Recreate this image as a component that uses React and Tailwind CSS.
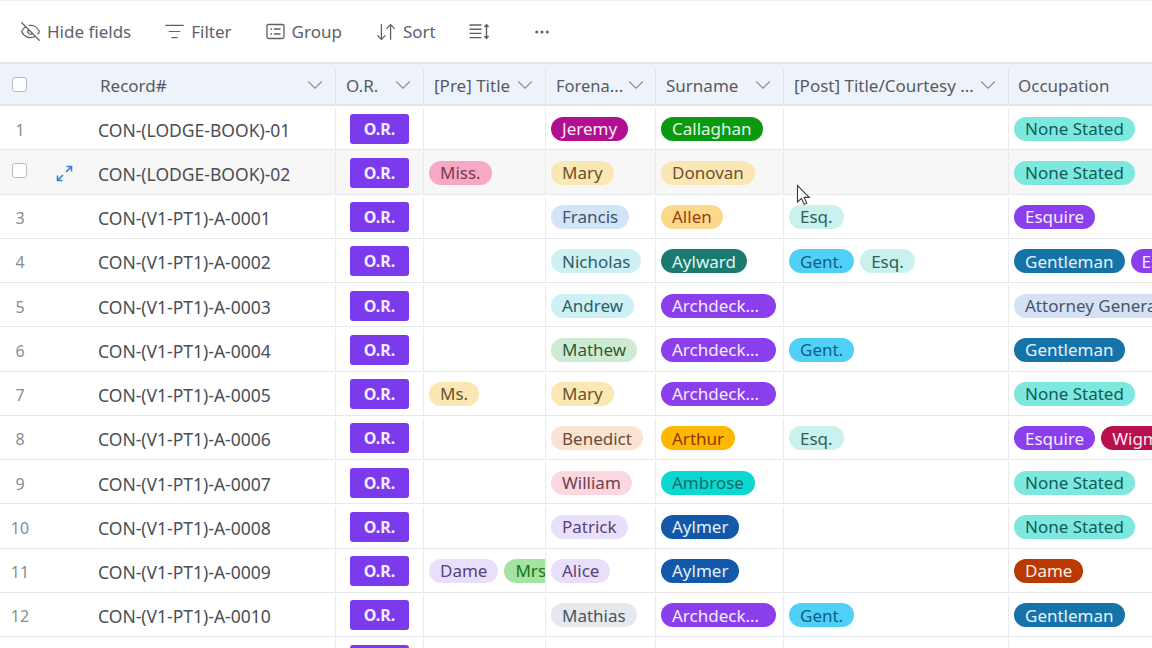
import React from "react";
import { EyeOff, ListFilter, ArrowDownUp, ChevronDown, Ellipsis } from "lucide-react";

const purple = "bg-[#7c3aed] text-[#f3ecff]";
const colors = {
  magenta: "bg-[#b0108f] text-[#fde8f7]",
  green: "bg-[#0a9a12] text-[#e4f8e4]",
  darkTeal: "bg-[#1b7a6e] text-[#e0f5f2]",
  violet: "bg-[#8b3fec] text-[#f3ebff]",
  orange: "bg-[#ffb800] text-[#8a3a0a]",
  cyan: "bg-[#0bd8d0] text-[#0f6d70]",
  navy: "bg-[#1259aa] text-[#e3effc]",
  blue: "bg-[#1673a8] text-[#e3f3fc]",
  rust: "bg-[#b83a02] text-[#fdebdd]",
  crimson: "bg-[#b8104f] text-[#fde5ee]",
  teal: "bg-[#7ce8de] text-[#125c5a]",
  sky: "bg-[#4fd0f7] text-[#0f5f88]",
  pink: "bg-[#f7a8c4] text-[#7c3a50]",
  cream: "bg-[#fbe7b3] text-[#6a5230]",
  peach: "bg-[#fae3d2] text-[#6a4a38]",
  ltBlue: "bg-[#d3e4f8] text-[#3d5470]",
  ltAqua: "bg-[#cdf0f5] text-[#2f5d66]",
  mint: "bg-[#c9f1ee] text-[#2f5f5a]",
  ltGreen: "bg-[#cfead2] text-[#2f5c38]",
  rose: "bg-[#fbd7e0] text-[#70404f]",
  lilac: "bg-[#eadffa] text-[#54437a]",
  grey: "bg-[#e5e8ed] text-[#4b5563]",
  ltGrey: "bg-[#d5e2f6] text-[#4b5563]",
  amber: "bg-[#fcd98a] text-[#9a3c10]",
  mrs: "bg-[#a6e3a0] text-[#14761f]",
};

const rows = [
  { n: 1, id: "CON-(LODGE-BOOK)-01", fore: ["Jeremy", "magenta"], sur: ["Callaghan", "green"], occ: [["None Stated", "teal"]] },
  { n: 2, id: "CON-(LODGE-BOOK)-02", hover: true, pre: [["Miss.", "pink"]], fore: ["Mary", "cream"], sur: ["Donovan", "cream"], occ: [["None Stated", "teal"]] },
  { n: 3, id: "CON-(V1-PT1)-A-0001", fore: ["Francis", "ltBlue"], sur: ["Allen", "amber"], post: [["Esq.", "mint"]], occ: [["Esquire", "violet"]] },
  { n: 4, id: "CON-(V1-PT1)-A-0002", fore: ["Nicholas", "ltAqua"], sur: ["Aylward", "darkTeal"], post: [["Gent.", "sky"], ["Esq.", "mint"]], occ: [["Gentleman", "blue"], ["Esquire", "violet"]] },
  { n: 5, id: "CON-(V1-PT1)-A-0003", fore: ["Andrew", "ltAqua"], sur: ["Archdeck...", "violet"], occ: [["Attorney General", "ltGrey"]] },
  { n: 6, id: "CON-(V1-PT1)-A-0004", fore: ["Mathew", "ltGreen"], sur: ["Archdeck...", "violet"], post: [["Gent.", "sky"]], occ: [["Gentleman", "blue"]] },
  { n: 7, id: "CON-(V1-PT1)-A-0005", pre: [["Ms.", "cream"]], fore: ["Mary", "cream"], sur: ["Archdeck...", "violet"], occ: [["None Stated", "teal"]] },
  { n: 8, id: "CON-(V1-PT1)-A-0006", fore: ["Benedict", "peach"], sur: ["Arthur", "orange"], post: [["Esq.", "mint"]], occ: [["Esquire", "violet"], ["Wigmaker", "crimson"]] },
  { n: 9, id: "CON-(V1-PT1)-A-0007", fore: ["William", "rose"], sur: ["Ambrose", "cyan"], occ: [["None Stated", "teal"]] },
  { n: 10, id: "CON-(V1-PT1)-A-0008", fore: ["Patrick", "lilac"], sur: ["Aylmer", "navy"], occ: [["None Stated", "teal"]] },
  { n: 11, id: "CON-(V1-PT1)-A-0009", pre: [["Dame", "lilac"], ["Mrs", "mrs"]], fore: ["Alice", "lilac"], sur: ["Aylmer", "navy"], occ: [["Dame", "rust"]] },
  { n: 12, id: "CON-(V1-PT1)-A-0010", fore: ["Mathias", "grey"], sur: ["Archdeck...", "violet"], post: [["Gent.", "sky"]], occ: [["Gentleman", "blue"]] },
  { n: 13, id: "", pre: [["Mrs.", "mrs"]], fore: ["Mary", "cream"], sur: ["Archdeck...", "violet"], occ: [["None Stated", "teal"]] },
];

const gridCols = "grid grid-cols-[88px_248px_88px_122px_110px_128px_225px_1fr]";

// truncated labels keep extra room on the right of the pill
const Pill = ({ label, color }) => (
  <span className={`inline-flex h-6 shrink-0 items-center rounded-full pl-[11px] whitespace-nowrap ${label.endsWith("...") ? "pr-[17px]" : "pr-[11px]"} ${colors[color]}`}>
    {label}
  </span>
);

const Cell = ({ children, className = "" }) => (
  <div className={`flex min-w-0 items-center gap-1.5 overflow-hidden border-r border-[#e9ebee] pl-[5px] ${className}`}>{children}</div>
);

const ToolButton = ({ icon, label, className = "" }) => (
  <div className={`flex items-center ${className}`}>
    {icon}
    {label}
  </div>
);

const HeaderCell = ({ label, chevron = true, className = "" }) => (
  <div className={`flex min-w-0 items-center justify-between border-r border-[#e1e5ec] pr-[7px] pl-2.5 ${className}`}>
    <span className="whitespace-nowrap">{label}</span>
    {chevron && <ChevronDown size={26} strokeWidth={1} className="mb-0.5 shrink-0 text-[#8a919c]" />}
  </div>
);

const GroupIcon = () => (
  <svg width="19" height="17" viewBox="0 0 19 17" fill="none" stroke="currentColor" strokeWidth="1.3">
    <rect x="1" y="1.5" width="17" height="14" rx="1.5" />
    <path d="M4.5 6h1.5M8 6h6.5M4.5 11h1.5M8 11h6.5" />
  </svg>
);

const RowHeightIcon = () => (
  <svg width="21" height="17" viewBox="0 0 21 17" fill="none" stroke="currentColor" strokeWidth="1.4">
    <path d="M0.5 2h12M0.5 6.2h12M0.5 10.4h12M0.5 14.6h12M17.5 2v13M15.5 4l2-2.5 2 2.5M15.5 13l2 2.5 2-2.5" />
  </svg>
);

const ExpandIcon = () => (
  <svg width="17" height="17" viewBox="0 0 17 17" fill="none" stroke="#3b82c4" strokeWidth="1.6">
    <path d="M10 7l5-5M10.5 1.5h5v5M7 10l-5 5M1.5 10.5v5h5" />
  </svg>
);

const Cursor = () => (
  <svg className="absolute top-[184px] left-[796px]" width="15" height="23" viewBox="0 0 15 23" fill="#fff" stroke="#3a3a3a" strokeWidth="1.1">
    <path d="M1.5 1.5v16.5l4-3.6 2.7 6 2.6-1.1-2.7-5.9h5.2z" />
  </svg>
);

const Row = ({ row }) => (
  <div className={`${gridCols} h-[44.25px] border-b border-[#e6e8ec] pt-0.5 ${row.hover ? "bg-[#f7f7f8]" : "bg-white"}`}>
    <div className="flex items-center">
      {row.hover ? (
        <>
          <span className="mb-1 ml-3 h-[15px] w-[15px] rounded-[3px] border border-[#b9bcc2] bg-white" />
          <span className="ml-[29px] pt-0.5"><ExpandIcon /></span>
        </>
      ) : (
        <span className="w-10 pt-0.5 text-center text-[16px] text-[#878c94]">{row.n}</span>
      )}
    </div>
    <div className="flex items-center border-r border-[#e9ebee] pt-0.5 pl-2.5 text-[17.5px] text-[#4a4f57]">{row.id}</div>
    <div className="flex items-center justify-center border-r border-[#e9ebee]">
      <span className={`flex h-[30px] w-[59px] items-center justify-center rounded-[3px] text-[16px] font-bold ${purple}`}>O.R.</span>
    </div>
    <Cell className="pl-1.5">{row.pre?.map(([l, c]) => <Pill key={l} label={l} color={c} />)}</Cell>
    <Cell>
      <Pill label={row.fore[0]} color={row.fore[1]} />
    </Cell>
    <Cell>
      <Pill label={row.sur[0]} color={row.sur[1]} />
    </Cell>
    <Cell>{row.post?.map(([l, c]) => <Pill key={l} label={l} color={c} />)}</Cell>
    <Cell className="border-r-0">{row.occ.map(([l, c]) => <Pill key={l} label={l} color={c} />)}</Cell>
  </div>
);

export default function App() {
  return (
    <div className="relative h-[648px] w-[1152px] overflow-hidden bg-white font-['Noto_Sans',sans-serif] text-[17px] text-[#4a4f57]">
      <div className="h-px bg-[#f5efe6]" />
      <div className="flex h-[61px] items-center pl-5 text-[#5b616a]">
        <ToolButton icon={<EyeOff size={21} strokeWidth={1.4} className="mr-1.5" />} label="Hide fields" className="mr-[33px]" />
        <ToolButton icon={<ListFilter size={21} strokeWidth={1.4} className="mr-1.5" />} label="Filter" className="mr-[34px]" />
        <ToolButton icon={<GroupIcon />} label={<span className="ml-[7px]">Group</span>} className="mr-[33px]" />
        <ToolButton icon={<ArrowDownUp size={22} strokeWidth={1.4} className="mr-1.5" />} label="Sort" className="mr-[33px]" />
        <RowHeightIcon />
        <Ellipsis size={18} className="ml-[43px]" />
      </div>
      <div className={`${gridCols} h-[44px] border-y-2 border-y-[#e2e4e8] bg-[#eef3fa] pt-1 text-[#555b64]`}>
        <div className="flex items-center">
          <span className="mb-1 ml-3 h-[15px] w-[15px] rounded-[3px] border border-[#b9bcc2] bg-white" />
        </div>
        <HeaderCell label="Record#" className="pl-3" />
        <HeaderCell label="O.R." />
        <HeaderCell label="[Pre] Title" />
        <HeaderCell label={<span className="text-[16.5px]">Forena...</span>} />
        <HeaderCell label="Surname" />
        <HeaderCell label="[Post] Title/Courtesy ..." />
        <HeaderCell label="Occupation" chevron={false} className="border-r-0 pl-[9px]" />
      </div>
      {rows.map((row) => <Row key={row.n} row={row} />)}
      <Cursor />
    </div>
  );
}
